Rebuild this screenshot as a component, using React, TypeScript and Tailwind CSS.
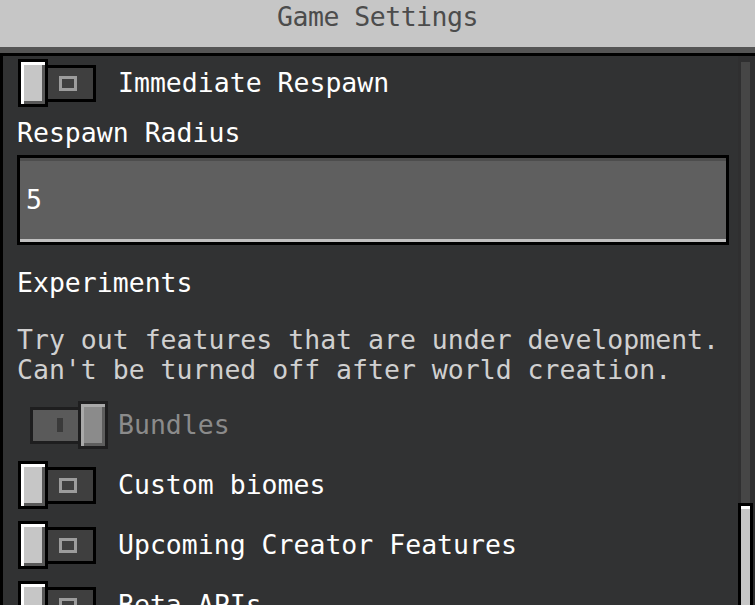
import React from "react";

type ToggleRow = { label: string; on?: boolean; disabled?: boolean };

const rows: ToggleRow[] = [
  { label: "Bundles", on: true, disabled: true },
  { label: "Custom biomes" },
  { label: "Upcoming Creator Features" },
  { label: "Beta APIs" },
];

const ToggleOff = () => (
  <div className="flex items-center ml-[1px]">
    <div className="w-[30px] h-[48px] border-[3px] border-black bg-[#c6c6c6] shadow-[inset_3px_3px_0_#ffffff,inset_-3px_-3px_0_#585858]" />
    <div className="w-[48px] h-[37px] border-[3px] border-l-0 border-black bg-[#3f3f3f] flex items-center justify-center">
      <div className="w-[18px] h-[15px] border-[3px] border-[#9c9c9c] -ml-[6px]" />
    </div>
  </div>
);

const ToggleOnDisabled = () => (
  <div className="flex items-center ml-[13px]">
    <div className="w-[48px] h-[37px] border-[3px] border-r-0 border-[#1e1e1f] bg-[#5a5a5a] flex items-center justify-center">
      <div className="w-[6px] h-[14px] bg-[#3a3a3a] ml-[9px]" />
    </div>
    <div className="w-[30px] h-[48px] border-[3px] border-[#1e1e1f] bg-[#8b8b8b] shadow-[inset_3px_3px_0_#a9a9a9,inset_-3px_-3px_0_#5e5e5e]" />
  </div>
);

export default function App() {
  return (
    <div
      className="w-[755px] h-[605px] overflow-hidden flex flex-col bg-[#313233] text-[26.5px] leading-[30px]"
      style={{ fontFamily: '"DejaVu Sans Mono", "Liberation Mono", monospace' }}
    >
      <div className="h-[47px] shrink-0 bg-[#c6c6c6] flex justify-center pt-[2px]">
        <span className="text-[#4c4c4c] tracking-[-0.5px]">Game Settings</span>
      </div>
      <div className="h-[6px] shrink-0 bg-[#555555]" />
      <div className="flex-1 flex border-t-[3px] border-l-[3px] border-black min-h-0">
        <div className="flex-1 flex flex-col pl-[14px] pr-[9px]">
          <div className="flex items-center h-[48px] mt-[3px] shrink-0">
            <ToggleOff />
            <span className="ml-[22px] text-white">Immediate Respawn</span>
          </div>
          <div className="mt-[11px] text-white shrink-0">Respawn Radius</div>
          <div className="mt-[7px] h-[90px] shrink-0 border-[3px] border-black bg-[#5f5f5f] shadow-[inset_0_3px_0_#4d4d4d,inset_0_-3px_0_#c0c0c0] flex items-center pl-[6px] text-white">
            5
          </div>
          <div className="mt-[23px] text-white shrink-0">Experiments</div>
          <div className="mt-[27px] text-[#d0d0d0] shrink-0">
            <div>Try out features that are under development.</div>
            <div>Can't be turned off after world creation.</div>
          </div>
          <div className="flex flex-col gap-[12px] mt-[16px] shrink-0">
            {rows.map((r) => (
              <div key={r.label} className="flex items-center h-[48px] shrink-0">
                {r.on ? <ToggleOnDisabled /> : <ToggleOff />}
                <span className={r.disabled ? "ml-[10px] text-[#8b8b8b]" : "ml-[22px] text-white"}>{r.label}</span>
              </div>
            ))}
          </div>
        </div>
        <div className="w-[17px] shrink-0 flex flex-col pt-[6px] bg-[#2f2f30]">
          <div className="h-[441px] w-[9px] ml-[3px] bg-[#464646] shrink-0" />
          <div className="flex-1 w-[15px] border-[3px] border-b-0 border-black bg-[#c6c6c6] shadow-[inset_0_3px_0_#ffffff]" />
        </div>
      </div>
    </div>
  );
}
